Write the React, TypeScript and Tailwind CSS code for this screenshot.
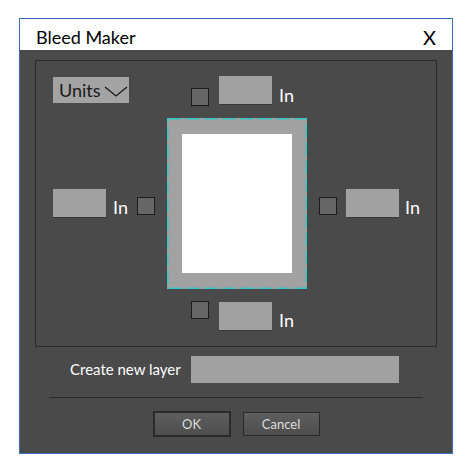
import React from "react";

function Check() {
  return <div className="w-[18px] h-[18px] shrink-0 bg-[#666666] border border-[#1c1c1c]" />;
}

function Field({ w = 53, h = 29 }: { w?: number; h?: number }) {
  return <div className="shrink-0 bg-[#a1a1a1] border-b border-[#3a3a3a]" style={{ width: w, height: h }} />;
}

function In() {
  return <span className="text-[18px] leading-none text-white">In</span>;
}

export default function App() {
  return (
    <div
      className="w-[473px] h-[476px] bg-white pt-[18px] pl-[19px]"
      style={{ fontFamily: "Lato, 'Open Sans', sans-serif" }}
    >
      <div className="w-[434px] h-[436px] border border-[#3b6cb8] flex flex-col bg-[#4a4a4a]">
        <div className="h-[31px] shrink-0 bg-white flex items-center justify-between pl-[16px] pr-[16px] pt-[4px]">
          <span className="text-[18px] text-black leading-none">Bleed Maker</span>
          <span className="text-[20px] text-black leading-none">X</span>
        </div>
        <div className="flex-1 flex flex-col pt-[10px] px-[15px]">
          <div className="h-[287px] border border-[#2b2b2b] grid grid-cols-[131px_140px_128px] grid-rows-[57px_171px_57px]">
            {/* row 1 */}
            <div className="pl-[17px] pt-[16px]">
              <div className="w-[76px] h-[26px] bg-[#a3a3a3] flex items-center pl-[6px] gap-[3px]">
                <span className="text-[18px] leading-none text-[#1a1a1a]">Units</span>
                <svg width="24" height="11" viewBox="0 0 24 11" className="mt-[2px]">
                  <path d="M1 1 L12 10 L23 1" fill="none" stroke="#1a1a1a" strokeWidth="1.3" />
                </svg>
              </div>
            </div>
            <div className="flex items-end pl-[24px] pb-[12px]">
              <Check />
              <div className="ml-[10px] mb-[1px]"><Field /></div>
              <div className="ml-[7px] mb-[-2px]"><In /></div>
            </div>
            <div />
            {/* row 2 */}
            <div className="flex items-center justify-end pr-[12px]">
              <div className="flex items-end">
                <Field />
                <div className="ml-[7px] mb-[-2px]"><In /></div>
              </div>
              <div className="ml-[9px] mt-[4px]"><Check /></div>
            </div>
            <div className="relative bg-[#a2a2a2] pt-[16px] pl-[15px]">
              <div className="w-[110px] h-[139px] bg-white" />
              <svg className="absolute inset-0" width="140" height="171" viewBox="0 0 140 171">
                <rect x="0.75" y="0.75" width="138.5" height="169.5" fill="none" stroke="#35c4c4" strokeWidth="1.5" strokeDasharray="14 4" />
              </svg>
            </div>
            <div className="flex items-center pl-[12px]">
              <div className="mt-[4px]"><Check /></div>
              <div className="flex items-end ml-[9px]">
                <Field />
                <div className="ml-[6px] mb-[-2px]"><In /></div>
              </div>
            </div>
            {/* row 3 */}
            <div />
            <div className="flex items-start pl-[24px] pt-[12px]">
              <Check />
              <div className="flex items-end ml-[10px] mt-[1px]">
                <Field />
                <div className="ml-[7px] mb-[-2px]"><In /></div>
              </div>
            </div>
            <div />
          </div>
          <div className="mt-[9px] flex items-center pl-[35px]">
            <span className="w-[121px] text-[15px] text-white leading-none">Create new layer</span>
            <div className="w-[208px] h-[27px] bg-[#a1a1a1]" />
          </div>
          <div className="mt-[14px] mx-[14px] h-px bg-[#2a2a2a]" />
          <div className="mt-[13px] flex justify-center items-center gap-[12px]">
            <div className="w-[78px] h-[26px] border-2 border-[#2a2a2a] bg-gradient-to-b from-[#5e5e5e] to-[#4e4e4e] flex items-center justify-center text-[13px] text-[#dcdcdc] leading-none">
              OK
            </div>
            <div className="w-[77px] h-[24px] border border-[#2a2a2a] bg-gradient-to-b from-[#5e5e5e] to-[#4e4e4e] flex items-center justify-center text-[13px] text-[#dcdcdc] leading-none">
              Cancel
            </div>
          </div>
        </div>
      </div>
    </div>
  );
}
